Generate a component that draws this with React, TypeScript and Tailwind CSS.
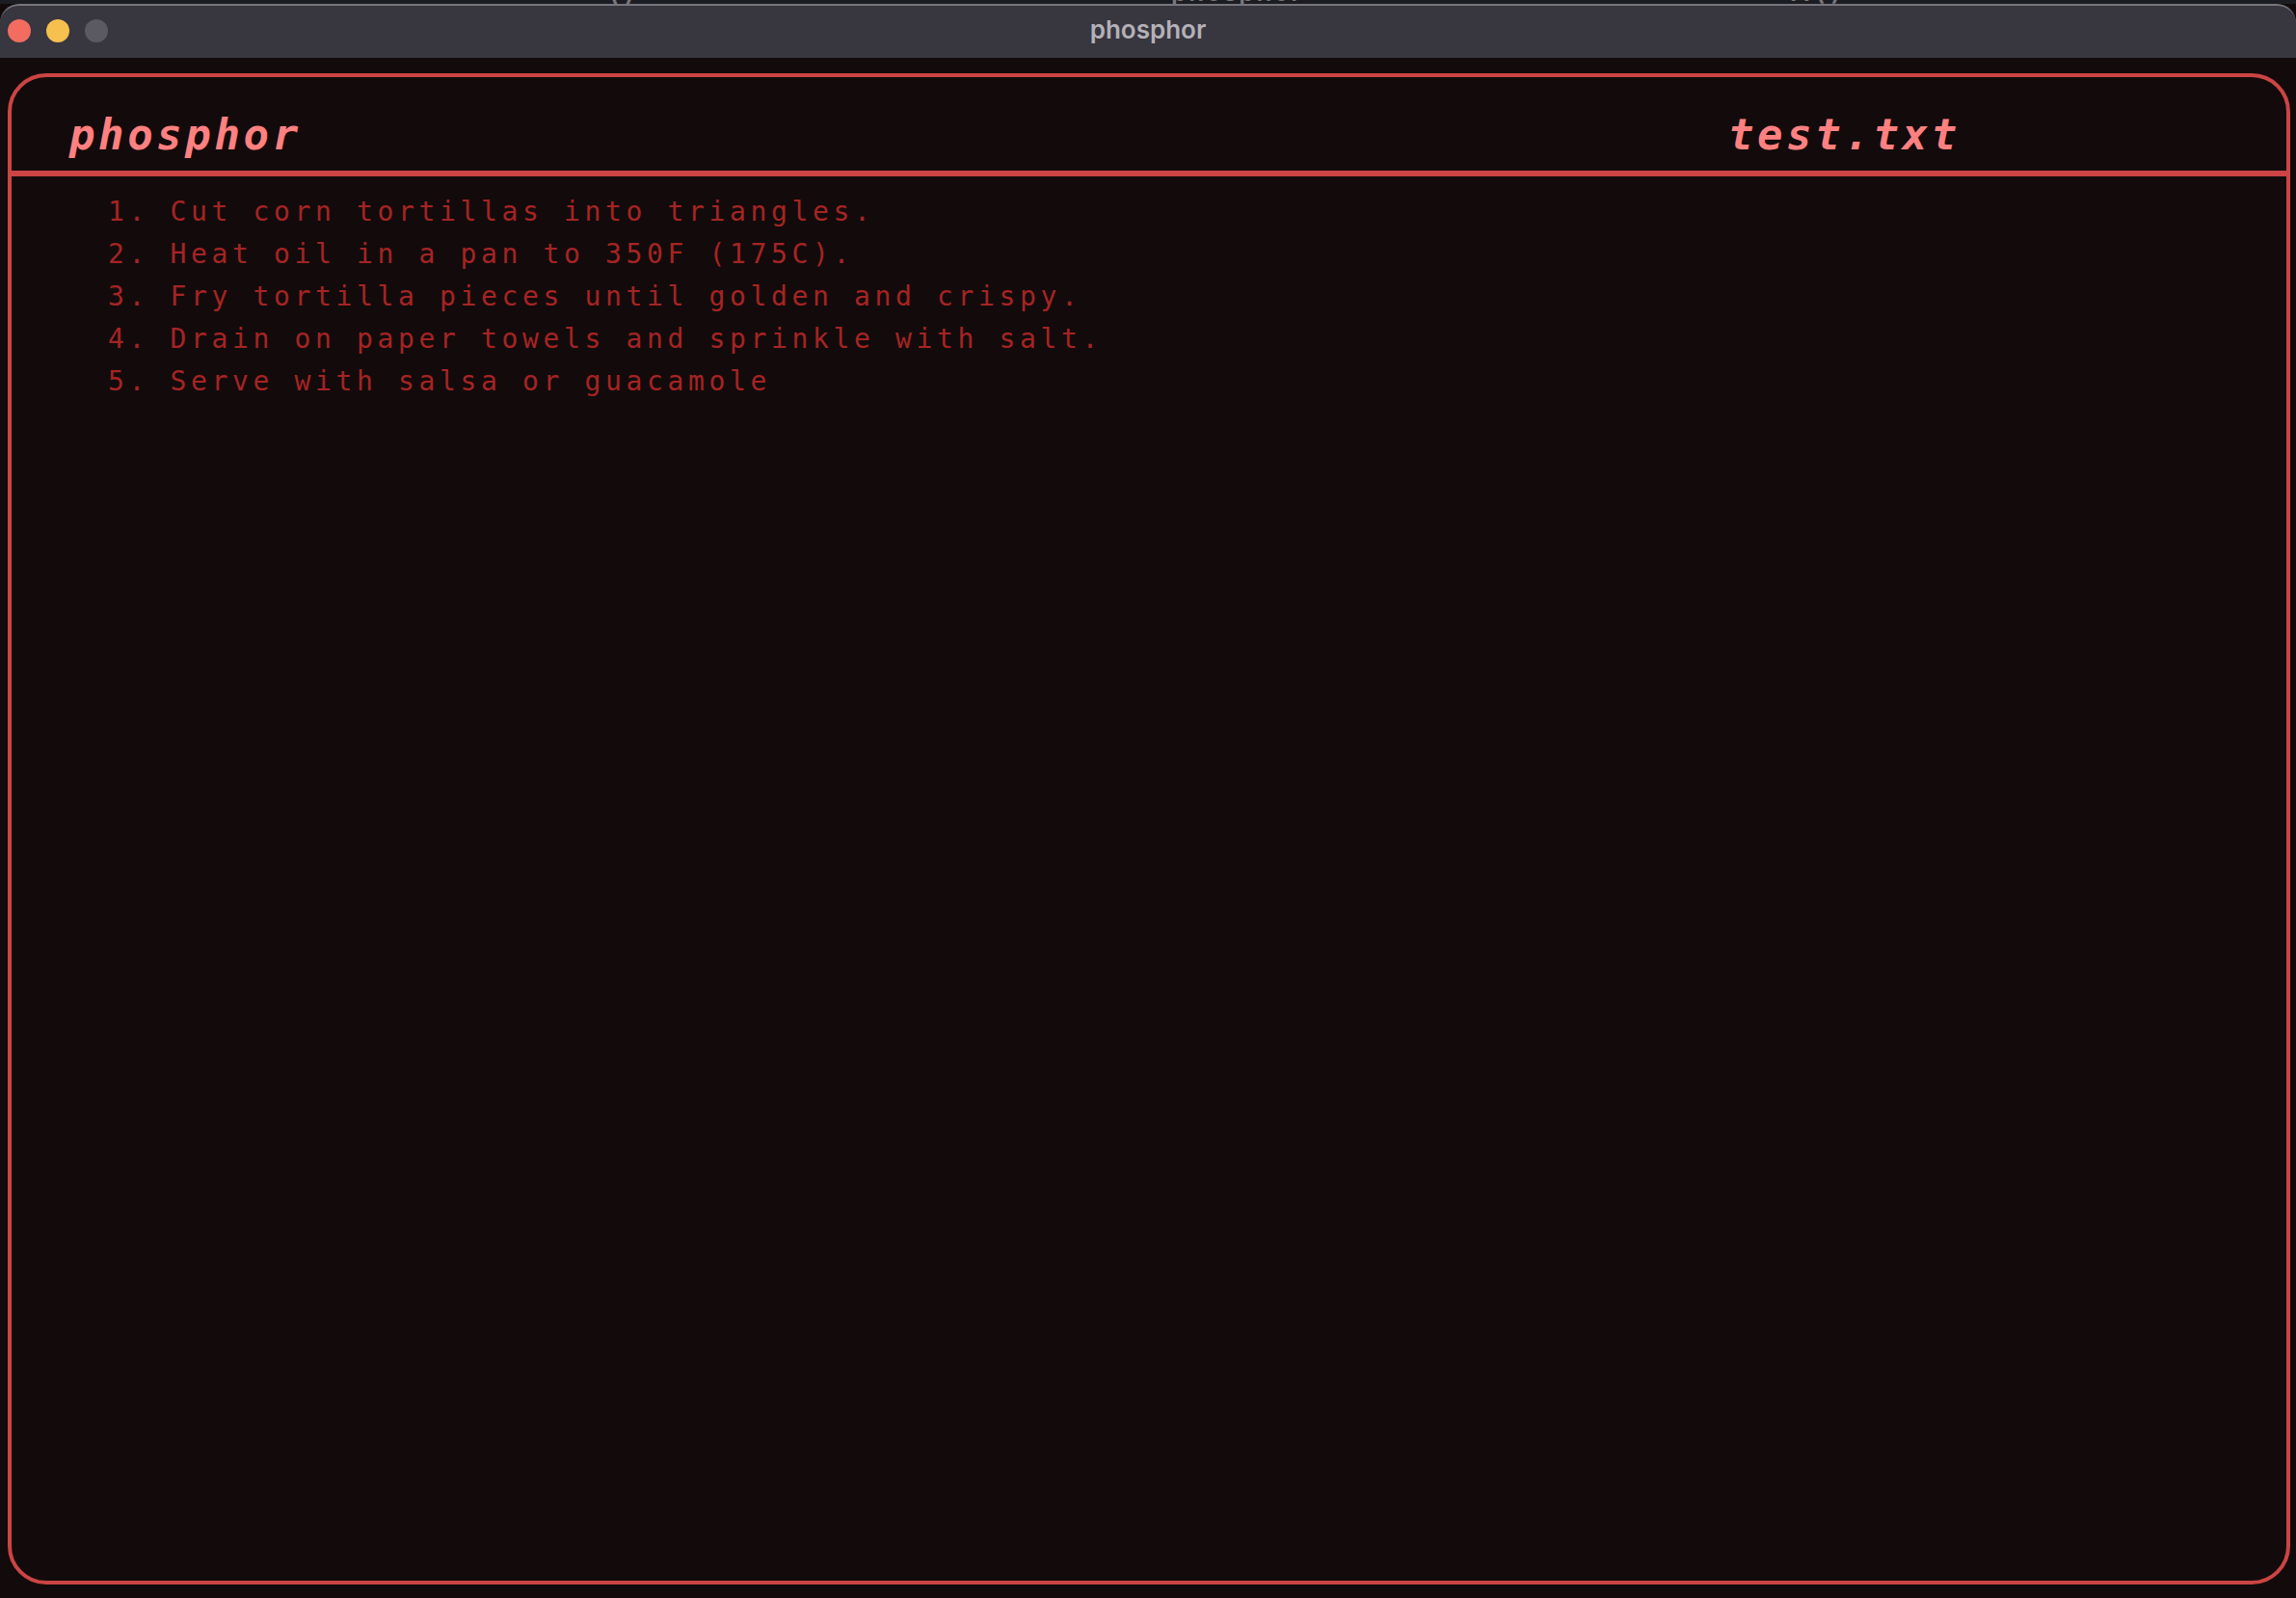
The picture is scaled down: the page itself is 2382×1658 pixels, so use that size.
const steps = [
  'Cut corn tortillas into triangles.',
  'Heat oil in a pan to 350F (175C).',
  'Fry tortilla pieces until golden and crispy.',
  'Drain on paper towels and sprinkle with salt.',
  'Serve with salsa or guacamole',
];

// sliver of the window behind, only the bottoms of its text show
function BehindStrip() {
  return (
    <div className="relative h-1 overflow-hidden bg-[#1c1d22] font-['Inter',sans-serif] text-[26px] leading-none font-semibold text-[#77777c]">
      <span className="absolute bottom-[-1px] left-[632px]">( )</span>
      <span className="absolute bottom-[-1px] left-[1215px] tracking-[2px]">phosphor</span>
      <span className="absolute bottom-[-1px] left-[1858px]">A ( )</span>
    </div>
  );
}

function TitleBar() {
  return (
    <div className="relative flex h-[56px] items-center rounded-t-[20px] border-t-2 border-[#77767c] bg-[#38363f] pl-2">
      <div className="-mt-0.5 flex gap-4">
        <span className="h-6 w-6 rounded-full bg-[#f26d5f]" />
        <span className="h-6 w-6 rounded-full bg-[#f5c04e]" />
        <span className="h-6 w-6 rounded-full bg-[#5b5a62]" />
      </div>
      <span className="absolute inset-x-0 bottom-[13px] text-center font-['Inter',sans-serif] text-[26px] leading-[32px] font-semibold text-[#b3b1b8]">
        phosphor
      </span>
    </div>
  );
}

export default function App() {
  return (
    <div className="flex h-[1658px] w-[2382px] flex-col bg-[#130b0b] font-['DejaVu_Sans_Mono',monospace]">
      <BehindStrip />
      <TitleBar />
      <div className="flex flex-1 flex-col pt-4 pr-[6px] pb-[14px] pl-2">
        <div className="flex flex-1 flex-col rounded-[40px] border-4 border-[#cc4444]">
          <div className="flex h-[103px] items-end border-b-[6px] border-[#cc4444] pb-[9px] pl-[60px] text-[44px] leading-[56px] font-bold tracking-[3.6px] text-[#ff8080] italic">
            <span className="w-[1721px]">phosphor</span>
            <span>test.txt</span>
          </div>
          <ol className="pt-[15px] pl-[100px] text-[28px] leading-[44px] tracking-[4.64px] text-[#a52424]">
            {steps.map((step, i) => (
              <li key={step} className="whitespace-pre">
                {i + 1}. {step}
              </li>
            ))}
          </ol>
        </div>
      </div>
    </div>
  );
}
